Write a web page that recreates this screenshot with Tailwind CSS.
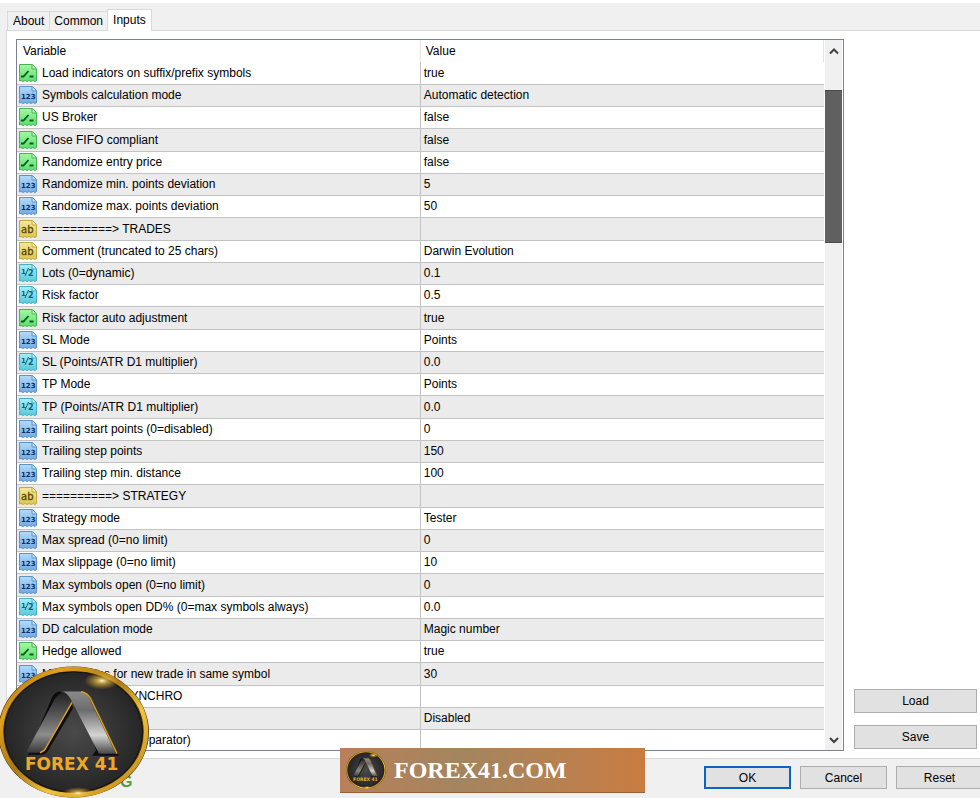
<!DOCTYPE html>
<html lang="en">
  <head>
    <meta charset="UTF-8" />
    <meta name="viewport" content="width=device-width, initial-scale=1.0" />
    <title>Inputs</title>
    <script src="https://cdn.jsdelivr.net/npm/@tailwindcss/browser@4"></script>
  </head>
  <body
    class="relative flex h-screen flex-col overflow-hidden border-t-3 border-white bg-[#f0f0f0] font-['Liberation_Sans',Arial,sans-serif] text-xs text-black"
  >
    <!-- Shared gradients -->
    <svg class="absolute size-0" aria-hidden="true">
      <linearGradient id="green" x2="0" y2="1"><stop stop-color="#a6f7a0" /><stop offset="1" stop-color="#5ade70" /></linearGradient>
      <linearGradient id="blue" x2="0" y2="1"><stop stop-color="#b4dcfb" /><stop offset="1" stop-color="#70a9e0" /></linearGradient>
      <linearGradient id="yellow" x2="0" y2="1"><stop stop-color="#f4e99a" /><stop offset="1" stop-color="#dcc650" /></linearGradient>
      <linearGradient id="cyan" x2="0" y2="1"><stop stop-color="#a4f0fa" /><stop offset="1" stop-color="#58c8dc" /></linearGradient>
      <linearGradient id="gold" x2="1" y2="1">
        <stop stop-color="#8a5a08" />
        <stop offset=".2" stop-color="#e0a21c" />
        <stop offset=".45" stop-color="#a87814" />
        <stop offset=".65" stop-color="#f0c440" />
        <stop offset="1" stop-color="#b87a10" />
      </linearGradient>
      <radialGradient id="coal"><stop stop-color="#4a4a4a" /><stop offset="1" stop-color="#262626" /></radialGradient>
      <radialGradient id="glow">
        <stop stop-color="#fff6c0" />
        <stop offset=".3" stop-color="#f3c84c" stop-opacity=".7" />
        <stop offset="1" stop-color="#e0a21c" stop-opacity="0" />
      </radialGradient>
      <linearGradient id="steel" x2="0" y2="1">
        <stop stop-color="#222" /><stop offset=".3" stop-color="#4c4c4c" /><stop offset=".7" stop-color="#8c8c8c" /><stop offset="1" stop-color="#383838" />
      </linearGradient>
      <linearGradient id="silver" x2="0" y2="1">
        <stop stop-color="#8a8a8a" /><stop offset=".3" stop-color="#6c6c6c" /><stop offset=".7" stop-color="#d4d4d4" /><stop offset="1" stop-color="#484848" />
      </linearGradient>
    </svg>

    <!-- Tabs -->
    <div role="tablist" class="flex shrink-0 items-end pt-1.5 pl-[7px]">
      <button role="tab" class="h-[19px] border border-r-0 border-b-0 border-[#d9d9d9] px-[5px]">About</button>
      <button role="tab" class="h-[19px] border-t border-l border-[#d9d9d9] px-1">Common</button>
      <button role="tab" aria-selected="true" class="relative z-10 -mb-px h-[22px] border border-b-0 border-[#d9d9d9] bg-white px-[5px] pb-0.5">Inputs</button>
    </div>

    <!-- Inputs panel -->
    <main class="ml-1.5 flex min-h-0 flex-1 gap-2.5 border border-r-0 border-[#d9d9d9] bg-white pt-2 pr-[3px] pb-[7px] pl-[9px]">
      <div class="flex min-w-0 flex-1 overflow-hidden border border-[#7b818f]">
        <div class="min-w-0 flex-1 overflow-hidden">
          <table class="w-full table-fixed border-collapse">
            <thead>
              <tr class="h-[22px] text-left">
                <th class="w-1/2 border-r border-[#e5e5e5] p-0 pl-1.5 font-normal">Variable</th>
                <th class="border-r border-[#e5e5e5] p-0 pl-[5px] font-normal">Value</th>
              </tr>
            </thead>
            <tbody id="inputs"></tbody>
          </table>
        </div>

        <!-- Scrollbar -->
        <div class="mx-px flex w-[17px] shrink-0 flex-col bg-[#f0f0f0]">
          <button aria-label="Scroll up" class="flex h-[21px] items-center justify-center">
            <svg class="size-3" viewBox="0 0 12 12" fill="none" stroke="#404040" stroke-width="2"><path d="M2 8.500l4-4 4 4" /></svg>
          </button>
          <div class="flex-1 pt-[29px]">
            <div class="h-[153px] border-y border-[#4a4a4a] bg-[#606060]"></div>
          </div>
          <button aria-label="Scroll down" class="flex h-[21px] items-center justify-center">
            <svg class="size-3" viewBox="0 0 12 12" fill="none" stroke="#404040" stroke-width="2"><path d="M2 4l4 4 4-4" /></svg>
          </button>
        </div>
      </div>

      <div class="flex w-[123px] shrink-0 flex-col justify-end gap-3 pb-0.5">
        <button class="h-6 border border-[#adadad] bg-[#e1e1e1]">Load</button>
        <button class="h-6 border border-[#adadad] bg-[#e1e1e1]">Save</button>
      </div>
    </main>

    <!-- Dialog buttons -->
    <footer class="-mr-[3px] flex h-[39px] shrink-0 justify-end gap-[9px] pt-[7px]">
      <button class="h-[23px] w-[87px] border-2 border-[#0a64c4] bg-[#e1e1e1]">OK</button>
      <button class="h-[23px] w-[87px] border border-[#adadad] bg-[#e1e1e1]">Cancel</button>
      <button class="h-[23px] w-[87px] border border-[#adadad] bg-[#e1e1e1]">Reset</button>
    </footer>

    <!-- Branding laid over the dialog -->
    <span class="absolute bottom-1 left-[120px] text-base font-bold text-[#5b9a3c]">G</span>
    <svg class="emblem absolute bottom-0 -left-0.5 z-20 h-[132px] w-[152px]" viewBox="0 0 152 134" preserveAspectRatio="none" role="img" aria-label="Forex 41"></svg>
    <div
      class="absolute bottom-[5px] left-[340px] z-20 flex h-[45px] w-[305px] items-center gap-2 border-b border-[#96603a] bg-linear-to-r from-[#b8805a] via-[#a3855f] via-40% to-[#c97c41] pl-1.5"
    >
      <svg class="emblem h-[38px] w-10" viewBox="0 0 152 134" preserveAspectRatio="none" role="img" aria-label="Forex 41"></svg>
      <span class="font-['Liberation_Serif',serif] text-2xl font-bold text-white">FOREX41.COM</span>
    </div>

    <script>
      const sheet = (fill, stroke) => `
        <path d="M.5.5h13l4 4v12l-1.500 1-2-1-2 1-2-1-2 1-2-1-2 1-2-1-1.500.500v-3l.5-1-.5-1z" fill="url(#${fill})" stroke="${stroke}" />
        <path d="M13 1v4h4" fill="#fff" fill-opacity=".35" stroke="${stroke}" />`;

      const icons = {
        bool: `${sheet("green", "#48b356")}
          <path d="M2 12.500h2.500l5-5.500M10.500 12.500h4" fill="none" stroke="#0b5a20" stroke-width="1.800" />`,
        int: `${sheet("blue", "#5b93c9")}
          <text x="2" y="13" font-size="7" font-weight="bold" font-family="DejaVu Sans" fill="#0c2f66">123</text>`,
        text: `${sheet("yellow", "#c2a93c")}
          <text x="2" y="13" font-size="10" font-family="DejaVu Sans" fill="#5a4600" stroke="#5a4600" stroke-width=".3">ab</text>`,
        real: `${sheet("cyan", "#47aebf")}
          <text x="2" y="10" font-size="7" font-weight="bold" font-family="DejaVu Sans" fill="#0b6378">1</text>
          <path d="M6 12l3.500-8" stroke="#0b6378" />
          <text x="9" y="12" font-size="8" font-weight="bold" font-family="DejaVu Sans" fill="#0b6378">2</text>`,
      };

      const emblem = `
        <ellipse cx="75.500" cy="67" rx="75.500" ry="66.500" fill="#4c3206" />
        <ellipse cx="75.500" cy="67" rx="72.500" ry="64" fill="none" stroke="url(#gold)" stroke-width="4.500" />
        <ellipse cx="75.500" cy="67" rx="69" ry="61" fill="url(#coal)" stroke="#111" />
        <ellipse cx="104" cy="15" rx="18" ry="9" fill="url(#glow)" />
        <ellipse cx="80" cy="129" rx="16" ry="6" fill="url(#glow)" />
        <path d="M30 90h13q5 0 7-4l25-43-3-9-10-8q-5 0-8 6zM98 86l-4 5h27l-29-59-8-6z" fill="#0c0c0c" />
        <path d="M28 88l28-53q4-8 11-8h5l2 9-27 48q-2 4-7 4z" fill="url(#steel)" />
        <path d="M74 37L48 83q-2 4-6 5" fill="none" stroke="#e0a21c" stroke-width="1.500" />
        <path d="M65 26h17q6 0 9 6l27 57h-17L75 38q-4-9-10-12z" fill="url(#silver)" />
        <path d="M83 26q6 1 9 6l27 57" fill="none" stroke="#e0a21c" stroke-width="1.500" />
        <text x="27" y="106" font-size="17" font-weight="bold" font-family="DejaVu Sans" fill="#eda824">FOREX 41</text>`;

      const inputs = [
        ["bool", "Load indicators on suffix/prefix symbols", "true"],
        ["int", "Symbols calculation mode", "Automatic detection"],
        ["bool", "US Broker", "false"],
        ["bool", "Close FIFO compliant", "false"],
        ["bool", "Randomize entry price", "false"],
        ["int", "Randomize min. points deviation", "5"],
        ["int", "Randomize max. points deviation", "50"],
        ["text", "==========> TRADES", ""],
        ["text", "Comment (truncated to 25 chars)", "Darwin Evolution"],
        ["real", "Lots (0=dynamic)", "0.1"],
        ["real", "Risk factor", "0.5"],
        ["bool", "Risk factor auto adjustment", "true"],
        ["int", "SL Mode", "Points"],
        ["real", "SL (Points/ATR D1 multiplier)", "0.0"],
        ["int", "TP Mode", "Points"],
        ["real", "TP (Points/ATR D1 multiplier)", "0.0"],
        ["int", "Trailing start points (0=disabled)", "0"],
        ["int", "Trailing step points", "150"],
        ["int", "Trailing step min. distance", "100"],
        ["text", "==========> STRATEGY", ""],
        ["int", "Strategy mode", "Tester"],
        ["int", "Max spread (0=no limit)", "0"],
        ["int", "Max slippage (0=no limit)", "10"],
        ["int", "Max symbols open (0=no limit)", "0"],
        ["real", "Max symbols open DD% (0=max symbols always)", "0.0"],
        ["int", "DD calculation mode", "Magic number"],
        ["bool", "Hedge allowed", "true"],
        ["int", "Min. minutes for new trade in same symbol", "30"],
        ["text", "==========> SYNCHRO", ""],
        ["int", "Synchro mode", "Disabled"],
        ["text", "Symbols list (, as separator)", ""],
      ];

      document.getElementById("inputs").innerHTML = inputs
        .map(
          ([type, name, value]) => `
            <tr class="h-[22px] border-b border-[#c3c3c3] even:bg-[#ebebeb] [&:nth-child(4n)]:h-[23px]">
              <td class="border-r border-[#c3c3c3] p-0 pl-0.5">
                <div class="flex items-center gap-[5px] whitespace-nowrap">
                  <svg class="size-[18px] shrink-0" viewBox="0 0 18 18" aria-hidden="true">${icons[type]}</svg>${name}
                </div>
              </td>
              <td class="p-0 pl-[3px]">${value}</td>
            </tr>`
        )
        .join("");

      document.querySelectorAll(".emblem").forEach((svg) => (svg.innerHTML = emblem));
    </script>
  </body>
</html>
